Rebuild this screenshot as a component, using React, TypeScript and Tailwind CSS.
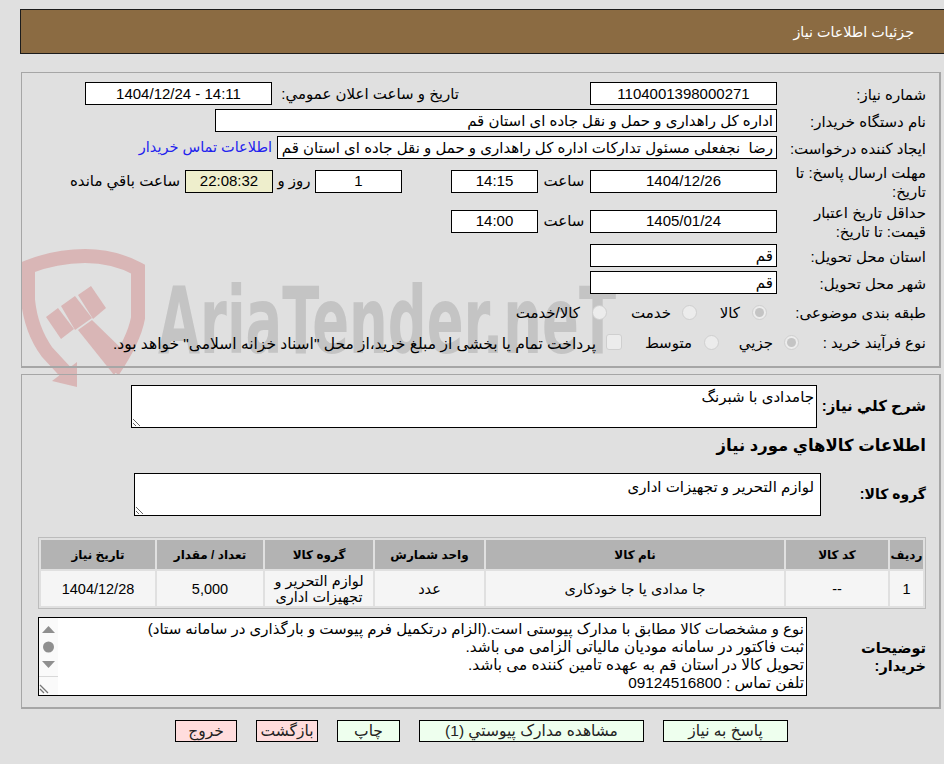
import type { ReactNode } from "react";

const boxCls = "h-[23px] border border-black bg-white flex items-center shrink-0";
const btnCls = "h-[22px] border border-black flex items-center justify-center text-[15.5px] text-[#222]";

function Label({ children, w = "w-[149px]" }: { children: ReactNode; w?: string }) {
  return <div className={`${w} shrink-0 leading-[19px] pl-1 pt-[1px]`}>{children}</div>;
}

function Box({ w, children, center }: { w: string; children?: ReactNode; center?: boolean }) {
  return (
    <div className={`${boxCls} ${w} ${center ? "justify-center" : "pr-[3px]"} pt-[1px] overflow-hidden whitespace-pre`}>
      {children}
    </div>
  );
}

function Radio({ checked }: { checked?: boolean }) {
  return (
    <span className="w-[15px] h-[15px] rounded-full border border-[#cfcfcf] bg-[#ececec] flex items-center justify-center shrink-0">
      {checked && <span className="w-[9px] h-[9px] rounded-full bg-[#c4c4c4]" />}
    </span>
  );
}

function Watermark() {
  return (
    <svg className="absolute top-0 left-0 pointer-events-none" width="944" height="764" viewBox="0 0 944 764">
      <g fill="#d9b6b6">
        <path
          d="M72 379 L47 352 Q31 330 28 300 L28 267 Q56 256 85 256 Q114 256 138 269 L138 318 Q134 340 113 371"
          fill="none"
          stroke="#d9b6b6"
          strokeWidth="14"
        />
        <polygon points="52,381 77,362 77,387" />
        <polygon points="46,317 58,308 74,329 61,339" />
        <polygon points="61,306 75,296 92,318 75,330" />
        <polygon points="78,295 91,286 106,308 93,319" />
        <polygon points="78,330 92,320 128,355 114,375" />
      </g>
      <text
        x="158"
        y="353"
        fill="#c4c4c4"
        fontFamily="'DejaVu Sans'"
        fontWeight="700"
        fontSize="92"
        textLength="458"
        lengthAdjust="spacingAndGlyphs"
        direction="ltr"
      >
        AriaTender.neT
      </text>
    </svg>
  );
}

const columns = [
  { title: "ردیف", w: "w-[33px]", value: "1" },
  { title: "کد کالا", w: "w-[102px]", value: "--" },
  { title: "نام کالا", w: "w-[298px]", value: "جا مدادی یا جا خودکاری" },
  { title: "واحد شمارش", w: "w-[109px]", value: "عدد" },
  { title: "گروه کالا", w: "w-[108px]", value: "لوازم التحریر و تجهیزات اداری" },
  { title: "تعداد / مقدار", w: "w-[106px]", value: "5,000" },
  { title: "تاریخ نیاز", w: "w-[114px]", value: "1404/12/28" },
];

export default function App() {
  return (
    <div
      dir="rtl"
      className="relative w-[944px] h-[764px] overflow-hidden bg-[#e0e0e0] text-[15px] text-black pt-[9px] font-['Liberation_Sans','DejaVu_Sans',sans-serif]"
    >
      <Watermark />
      <div className="relative">
        {/* Header */}
        <div className="h-[45px] ml-5 bg-[#8b6b42] border border-[#1c1c1c] border-r-0 flex items-center pr-[30px] pt-[2px] text-white text-[14.3px]">
          جزئیات اطلاعات نیاز
        </div>

        {/* Main info */}
        <div className="h-[296px] mt-[18px] ml-[21px] mr-[3px] border-2 border-[#a6a6a6] border-t border-l pr-[13px] pt-[9px]">
          <div className="flex items-center h-[23px]">
            <Label>شماره نیاز:</Label>
            <Box w="w-[187px]" center>1104001398000271</Box>
            <div className="w-[181px] mr-[131px] pt-[1px] shrink-0 whitespace-nowrap">تاریخ و ساعت اعلان عمومي:</div>
            <Box w="w-[187px] mr-[6px]" center><span dir="ltr">1404/12/24 - 14:11</span></Box>
          </div>
          <div className="flex items-center h-[23px] mt-1">
            <Label>نام دستگاه خریدار:</Label>
            <Box w="w-[562px]">اداره کل راهداری و حمل و نقل جاده ای استان قم</Box>
          </div>
          <div className="flex items-center h-[23px] mt-1">
            <Label>ایجاد کننده درخواست:</Label>
            <Box w="w-[500px]">رضا  نجفعلی مسئول تدارکات اداره کل راهداری و حمل و نقل جاده ای استان قم</Box>
            <a className="mr-[5px] pt-[1px] text-[14.5px] text-[#2222ee] whitespace-nowrap">اطلاعات تماس خریدار</a>
          </div>
          <div className="flex items-center h-[40px] mt-[2px]">
            <Label>مهلت ارسال پاسخ: تا تاریخ:</Label>
            <Box w="w-[187px]" center>1404/12/26</Box>
            <div className="w-[52px] pt-[1px] text-center shrink-0">ساعت</div>
            <Box w="w-[87px]" center>14:15</Box>
            <div className="w-[49px] shrink-0" />
            <Box w="w-[87px]" center>1</Box>
            <div className="w-[42px] pt-[1px] text-center shrink-0">روز و</div>
            <Box w="w-[88px] !bg-[#eeeecc]" center>22:08:32</Box>
            <div className="mr-[5px] pt-[1px] whitespace-nowrap">ساعت باقي مانده</div>
          </div>
          <div className="flex items-center h-[40px]">
            <Label>حداقل تاریخ اعتبار قیمت: تا تاریخ:</Label>
            <Box w="w-[187px]" center>1405/01/24</Box>
            <div className="w-[52px] pt-[1px] text-center shrink-0">ساعت</div>
            <Box w="w-[87px]" center>14:00</Box>
          </div>
          <div className="flex items-center h-[23px] mt-[3px]">
            <Label>استان محل تحویل:</Label>
            <Box w="w-[187px]">قم</Box>
          </div>
          <div className="flex items-center h-[23px] mt-1">
            <Label>شهر محل تحویل:</Label>
            <Box w="w-[187px]">قم</Box>
          </div>
          <div className="flex items-center h-[30px] mt-[3px] whitespace-nowrap">
            <Label w="w-[159px]">طبقه بندی موضوعی:</Label>
            <Radio checked />
            <span className="w-[43px] mr-3 pt-[3px]">کالا</span>
            <Radio />
            <span className="w-[64px] mr-[11px] pt-[3px]">خدمت</span>
            <Radio />
            <span className="mr-3 pt-[3px]">کالا/خدمت</span>
          </div>
          <div className="flex items-center h-[30px] whitespace-nowrap">
            <Label w="w-[127px]">نوع فرآیند خرید :</Label>
            <Radio checked />
            <span className="w-[54px] mr-[11px] pt-[3px]">جزیي</span>
            <Radio />
            <span className="w-[70px] mr-3 pt-[3px]">متوسط</span>
            <span className="w-4 h-4 rounded-[3px] border border-[#cfcfcf] bg-[#ececec] shrink-0" />
            <span className="mr-[10px] pt-[3px] text-[15.5px]">پرداخت تمام یا بخشی از مبلغ خرید،از محل "اسناد خزانه اسلامی" خواهد بود.</span>
          </div>
        </div>

        {/* Details */}
        <div className="h-[335px] mt-[6px] ml-[21px] mr-[3px] border-2 border-[#a6a6a6] border-t border-l pr-[13px] pt-[10px]">
          <div className="flex items-center">
            <div className="w-[109px] shrink-0 font-bold whitespace-nowrap">شرح کلي نیاز:</div>
            <textarea
              readOnly
              defaultValue="جامدادی با شبرنگ"
              className="block w-[686px] h-[43px] border border-black bg-white outline-none pr-[2px] pt-[2px] leading-[18px]"
            />
          </div>
          <div className="font-bold text-[16.5px] h-[45px] pb-[10px] flex items-center">اطلاعات کالاهاي مورد نیاز</div>
          <div className="flex items-center">
            <div className="w-[105px] shrink-0 font-bold text-[14px]">گروه کالا:</div>
            <textarea
              readOnly
              defaultValue="لوازم التحریر و تجهیزات اداری"
              className="block w-[687px] h-[43px] border border-black bg-white outline-none pr-[6px] pt-[4px] leading-[18px]"
            />
          </div>

          {/* Items table */}
          <table className="mt-[21px] w-[888px] table-fixed border border-[#bcbcbc] border-separate border-spacing-[2px] text-center">
            <thead>
              <tr className="h-[29px]">
                {columns.map((c) => (
                  <th key={c.title} className={`${c.w} p-0 bg-[#b3b3b3] font-bold text-[12px]`}>
                    {c.title}
                  </th>
                ))}
              </tr>
            </thead>
            <tbody>
              <tr className="h-[35px]">
                {columns.map((c) => (
                  <td key={c.title} className="p-0 pt-[1px] bg-[#f5f5f5] text-[14.5px] leading-[16px]">
                    {c.value}
                  </td>
                ))}
              </tr>
            </tbody>
          </table>

          <div className="flex items-center mt-[8px]">
            <div className="w-[119px] shrink-0 font-bold text-[14.5px] leading-[18px] pl-8">توضیحات خریدار:</div>
            <div className="w-[769px] h-[79px] border border-black bg-white flex shrink-0">
              <div className="flex-1 pr-[2px] pt-[2px] text-[15.3px] leading-[18px] whitespace-nowrap overflow-hidden">
                <div className="text-[15px]">نوع و مشخصات کالا مطابق با مدارک پیوستی است.(الزام درتکمیل فرم پیوست و بارگذاری در سامانه ستاد)</div>
                <div>ثبت فاکتور در سامانه مودیان مالیاتی الزامی می باشد.</div>
                <div>تحویل کالا در استان قم به عهده تامین کننده می باشد.</div>
                <div>تلفن تماس : 09124516800</div>
              </div>
              <div className="w-[19px] shrink-0 bg-[#fafafa] flex flex-col">
                <svg width="19" height="58" viewBox="0 0 19 58" className="shrink-0">
                  <polygon points="9.5,8 16,15 3,15" fill="#8f8f8f" />
                  <circle cx="9.5" cy="29" r="5.5" fill="#8f8f8f" />
                  <polygon points="3,43 16,43 9.5,50" fill="#8f8f8f" />
                </svg>
                <div className="flex-1 border-t border-[#d8d8d8] flex items-end">
                  <svg width="10" height="10" viewBox="0 0 10 10" className="mb-[1px] mr-[9px]">
                    <path d="M1 1 L9 9 M1 5 L5 9" stroke="#777" strokeWidth="1.3" />
                  </svg>
                </div>
              </div>
            </div>
          </div>
        </div>

        {/* Actions */}
        <div className="flex mt-[11px] mr-[156px] whitespace-nowrap">
          <div className={`${btnCls} w-[125px] bg-[#eeffee]`}>پاسخ به نیاز</div>
          <div className={`${btnCls} w-[225px] mr-[19px] bg-[#eeffee]`}>مشاهده مدارک پیوستي (1)</div>
          <div className={`${btnCls} w-[63px] mr-[19px] bg-[#eeffee]`}>چاپ</div>
          <div className={`${btnCls} w-[62px] mr-[19px] bg-[#ffdddd]`}>بازگشت</div>
          <div className={`${btnCls} w-[62px] mr-[19px] bg-[#ffdddd]`}>خروج</div>
        </div>
      </div>
    </div>
  );
}
